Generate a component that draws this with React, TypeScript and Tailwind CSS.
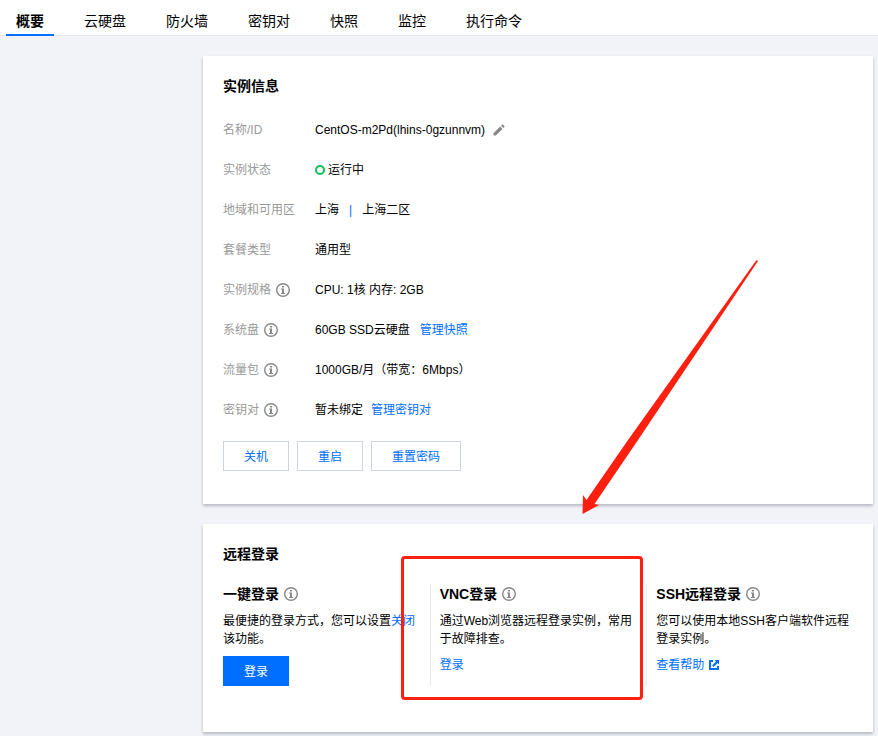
import type { ReactNode } from "react";

const tabs = ["概要", "云硬盘", "防火墙", "密钥对", "快照", "监控", "执行命令"];

function InfoIcon() {
  return (
    <svg viewBox="0 0 14 14" className="size-[14px] shrink-0" fill="none" aria-hidden="true">
      <circle cx="7" cy="7" r="6.3" stroke="#888" strokeWidth="1.4" />
      <path d="M6 3h2v1.500H6zM5 5.600h3V10h1v1H5v-1h1V6.600H5z" fill="#888" />
    </svg>
  );
}

function EditIcon() {
  return (
    <svg viewBox="0 0 12 12" className="size-3" fill="#888" aria-hidden="true">
      <path d="M.5 9.2 7.2 2.6l2.3 2.3-6.7 6.6H.5zM8 1.8 9.1.7q.5-.4 1 0l1.2 1.2q.5.5 0 1L10.2 4.1z" />
    </svg>
  );
}

function ExternalIcon() {
  return (
    <svg viewBox="0 0 10 10" className="size-[10px]" fill="#006eff" aria-hidden="true">
      <path d="M0 0h4v2H2v6h6V6h2v4H0z" />
      <path d="M5.500 0H10v4.500L8.500 3 4.600 6.900l-1.500-1.500L7 1.500z" />
    </svg>
  );
}

function Card({ title, children }: { title: string; children: ReactNode }) {
  return (
    <section className="bg-white px-5 pt-5 shadow-[0_2px_3px_0_rgba(54,58,80,0.32)]">
      <h2 className="text-sm leading-5 font-bold text-black">{title}</h2>
      {children}
    </section>
  );
}

function InfoRow({ label, info, children }: { label: string; info?: boolean; children: ReactNode }) {
  return (
    <div className="flex h-5 items-center">
      <dt className="flex w-[92px] shrink-0 items-center gap-[5px] text-[#999]">
        {label}
        {info && <InfoIcon />}
      </dt>
      <dd className="flex items-center">{children}</dd>
    </div>
  );
}

function ActionButton({ children }: { children: ReactNode }) {
  return (
    <button type="button" className="h-[30px] border border-[#cfd5de] bg-white px-5 pt-px text-[#006eff]">
      {children}
    </button>
  );
}

function LoginTitle({ children }: { children: ReactNode }) {
  return (
    <h3 className="mb-2 flex items-center gap-[5px] text-sm leading-5 font-bold">
      {children}
      <InfoIcon />
    </h3>
  );
}

export default function App() {
  return (
    <div
      lang="zh-CN"
      className="min-h-screen bg-[#f2f3f8] pb-1 font-['Liberation_Sans','Noto_Sans_CJK_SC',sans-serif] text-xs leading-[18px] text-black"
    >
      <nav className="flex h-9 gap-5 border-b border-[#e5e8ed] bg-white pl-[6px]">
        {tabs.map((tab, i) => (
          <a
            key={tab}
            href="#"
            className={
              i === 0
                ? "-mb-px border-b-2 border-[#006eff] px-[10px] pt-[11px] text-sm leading-5 font-bold"
                : "px-[10px] pt-[11px] text-sm leading-5"
            }
          >
            {tab}
          </a>
        ))}
      </nav>

      <main className="relative mt-5 mr-[5px] ml-[203px] flex flex-col gap-5">
        <Card title="实例信息">
          <dl className="mt-6 flex flex-col gap-5">
            <InfoRow label="名称/ID">
              CentOS-m2Pd(lhins-0gzunnvm)
              <button type="button" aria-label="编辑名称" className="ml-2">
                <EditIcon />
              </button>
            </InfoRow>
            <InfoRow label="实例状态">
              <span className="mr-[3px] size-[10px] rounded-full border-2 border-[#0abf5b]" />
              运行中
            </InfoRow>
            <InfoRow label="地域和可用区">
              上海
              <span className="mx-[10px] text-[#006eff]">|</span>
              上海二区
            </InfoRow>
            <InfoRow label="套餐类型">通用型</InfoRow>
            <InfoRow label="实例规格" info>
              CPU: 1核 内存: 2GB
            </InfoRow>
            <InfoRow label="系统盘" info>
              60GB SSD云硬盘
              <a href="#" className="ml-[10px] text-[#006eff]">管理快照</a>
            </InfoRow>
            <InfoRow label="流量包" info>1000GB/月（带宽：6Mbps）</InfoRow>
            <InfoRow label="密钥对" info>
              暂未绑定
              <a href="#" className="ml-2 text-[#006eff]">管理密钥对</a>
            </InfoRow>
          </dl>
          <div className="mt-[21px] flex gap-2 pb-[33px]">
            <ActionButton>关机</ActionButton>
            <ActionButton>重启</ActionButton>
            <ActionButton>重置密码</ActionButton>
          </div>
        </Card>

        <Card title="远程登录">
          <div className="-mr-5 grid grid-cols-3 pt-5 pb-[46px]">
            <div className="pr-4">
              <LoginTitle>一键登录</LoginTitle>
              <p>
                最便捷的登录方式，您可以设置<a href="#" className="text-[#006eff]">关闭</a>该功能。
              </p>
              <button type="button" className="mt-2 h-[30px] bg-[#006eff] px-[21px] pt-px text-white">
                登录
              </button>
            </div>
            <div className="relative -ml-[10px] border-l border-[#e5e8ed] pr-4 pl-[9px]">
              <LoginTitle>VNC登录</LoginTitle>
              <p>通过Web浏览器远程登录实例，常用于故障排查。</p>
              <a href="#" className="mt-2 inline-block text-[#006eff]">登录</a>
              {/* highlight frame */}
              <div className="pointer-events-none absolute -top-7 right-[13px] -bottom-[14px] -left-[30px] rounded-[4px] border-3 border-[#ff1f0f]" />
            </div>
            <div className="-ml-[10px] border-l border-[#e5e8ed] pr-4 pl-[9px]">
              <LoginTitle>SSH远程登录</LoginTitle>
              <p>您可以使用本地SSH客户端软件远程登录实例。</p>
              <a href="#" className="mt-2 inline-flex items-center gap-[5px] text-[#006eff]">
                查看帮助
                <ExternalIcon />
              </a>
            </div>
          </div>
        </Card>

        {/* arrow pointing at the VNC frame */}
        <svg
          viewBox="0 0 176 254"
          className="pointer-events-none absolute top-[204px] left-[379px] h-[254px] w-[176px]"
          fill="#ff1f0f"
          aria-hidden="true"
        >
          <path d="M174.500 0 176 1 56 180 12.500 244 17 245 .500 254 1 235 4.500 240 46 180z" />
        </svg>
      </main>
    </div>
  );
}
